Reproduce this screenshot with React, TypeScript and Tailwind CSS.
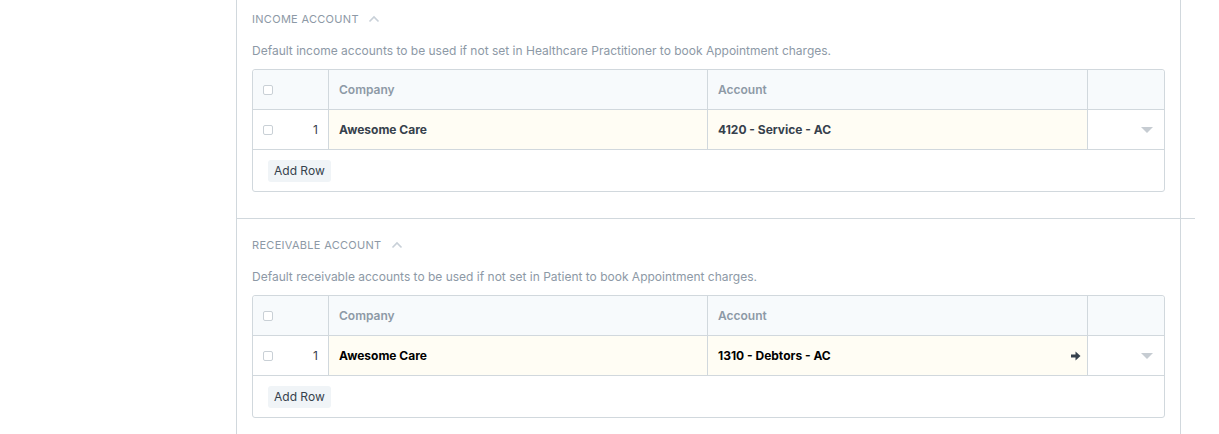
import React from "react";

type Row = { idx: number; company: string; account: string };

interface SectionProps {
  title: string;
  description: string;
  rows: Row[];
  focused?: boolean;
  first?: boolean;
}

function ChevronUp() {
  return (
    <svg width="12" height="8" viewBox="0 0 12 8" className="ml-[9px]">
      <path d="M1.5 6.5 L6 2 L10.5 6.5" fill="none" stroke="#c8d0d8" strokeWidth="1.6" />
    </svg>
  );
}

function Caret() {
  return (
    <svg width="12" height="6" viewBox="0 0 12 6">
      <path d="M0 0 H12 L6 6 Z" fill="#c6ccd2" />
    </svg>
  );
}

function ArrowRight() {
  return (
    <svg width="10" height="10" viewBox="0 0 10 10">
      <rect x="0" y="3.5" width="5" height="3" fill="#36414c" />
      <path d="M4.5 0.5 L9.5 5 L4.5 9.5 Z" fill="#36414c" />
    </svg>
  );
}

function Checkbox() {
  return <span className="block w-[10px] h-[10px] rounded-[2px] border border-[#c9d0d6] bg-white" />;
}

function TableSection({ title, description, rows, focused, first }: SectionProps) {
  const dataText = focused ? "text-black" : "text-[#36414c]";
  return (
    <section className={`${first ? "pt-[10px]" : "pt-[17px]"} pb-[26px] pl-[15px] pr-[15px]`}>
      <div className="flex items-center h-[18px] text-[11px] tracking-[0.3px] uppercase text-[#8d99a6]">
        {title}
        <ChevronUp />
      </div>
      <p className="mt-[14px] h-[18px] leading-[18px] text-[12px] text-[#8d99a6]">{description}</p>

      <div className="mt-[9px] border border-[#d1d8dd] rounded-[3px] text-[12px]">
        {/* header */}
        <div className="flex h-[40px] bg-[#f7fafc] border-b border-[#d1d8dd] rounded-t-[3px] font-semibold text-[#8d99a6]">
          <div className="w-[76px] shrink-0 flex items-center pl-[10px] border-r border-[#d1d8dd]">
            <Checkbox />
          </div>
          <div className="w-[379px] shrink-0 flex items-center px-[10px] border-r border-[#d1d8dd]">Company</div>
          <div className="w-[380px] shrink-0 flex items-center px-[10px] border-r border-[#d1d8dd]">Account</div>
          <div className="flex-1" />
        </div>

        {rows.map((r) => (
          <div key={r.idx} className="flex h-[40px] border-b border-[#d1d8dd]">
            <div className="w-[76px] shrink-0 flex items-center justify-between pl-[10px] pr-[10px] border-r border-[#d1d8dd] text-[#36414c]">
              <Checkbox />
              <span>{r.idx}</span>
            </div>
            <div className={`w-[379px] shrink-0 flex items-center px-[10px] border-r border-[#d1d8dd] bg-[#fffdf4] font-bold ${dataText}`}>
              {r.company}
            </div>
            <div className={`w-[380px] shrink-0 flex items-center justify-between pl-[10px] pr-[6px] border-r border-[#d1d8dd] bg-[#fffdf4] font-bold ${dataText}`}>
              <span>{r.account}</span>
              {focused && <ArrowRight />}
            </div>
            <div className="flex-1 flex items-center justify-end pr-[11px]">
              <Caret />
            </div>
          </div>
        ))}

        <div className="h-[41px] pl-[15px] pt-[10px]">
          <button className="h-[22px] px-[6px] rounded-[3px] bg-[#f0f4f7] text-[12px] text-[#36414c]">Add Row</button>
        </div>
      </div>
    </section>
  );
}

export default function App() {
  return (
    <div className="w-[1219px] h-[434px] overflow-hidden bg-white" style={{ fontFamily: "Inter, 'Noto Sans', sans-serif" }}>
      <div className="ml-[236px] w-[945px] h-full border-x border-[#d1d8dd]">
        <TableSection
          first
          title="Income Account"
          description="Default income accounts to be used if not set in Healthcare Practitioner to book Appointment charges."
          rows={[{ idx: 1, company: "Awesome Care", account: "4120 - Service - AC" }]}
        />
        <div className="h-px bg-[#d1d8dd] mr-[-15px]" />
        <TableSection
          focused
          title="Receivable Account"
          description="Default receivable accounts to be used if not set in Patient to book Appointment charges."
          rows={[{ idx: 1, company: "Awesome Care", account: "1310 - Debtors - AC" }]}
        />
      </div>
    </div>
  );
}
